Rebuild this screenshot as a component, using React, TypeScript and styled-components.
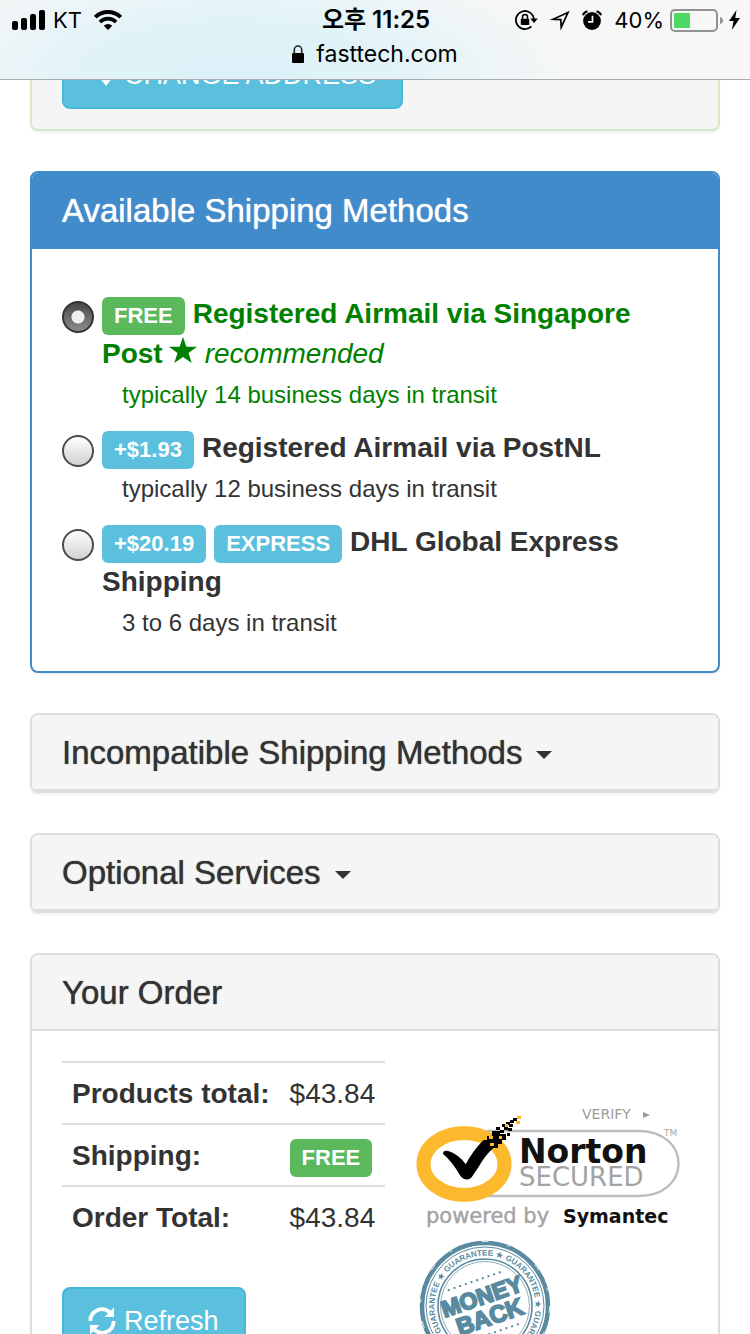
import React, { useState } from 'react';
import styled, { createGlobalStyle, css } from 'styled-components';

const sans = `"Liberation Sans", Arial, "Noto Sans CJK KR", sans-serif`;
const system = `Inter, "Noto Sans CJK KR", sans-serif`;

const GlobalStyle = createGlobalStyle`
  *, *::before, *::after { box-sizing: border-box; }
  html { scrollbar-width: none; }
  body {
    margin: 0;
    background: #fff;
    color: #333;
    font: 28px/40px ${sans};
  }
`;

const BrowserBar = styled.header`
  position: fixed;
  top: 0;
  left: 0;
  right: 0;
  z-index: 10;
  height: 80px;
  border-bottom: 1px solid #a9abac;
  background:
    radial-gradient(ellipse 340px 130px at 235px 80px, #dbf1f8 0%, #e1f3f8 45%, rgba(247, 247, 247, 0) 100%),
    #f7f7f7;
  color: #000;
  font-family: ${system};
`;

const StatusRow = styled.div`
  display: grid;
  grid-template-columns: 1fr auto 1fr;
  align-items: center;
  height: 40px;
  padding: 0 10px 0 12px;
  font-size: 22px;
  line-height: 40px;
`;

const StatusGroup = styled.div<{ $end?: boolean }>`
  display: flex;
  align-items: center;
  gap: ${(p) => (p.$end ? '6px' : '8px')};
  justify-content: ${(p) => (p.$end ? 'flex-end' : 'flex-start')};
  white-space: nowrap;
`;

const StatusIcons = styled.div`
  display: flex;
  align-items: center;
  gap: 12px;
  margin-right: 6px;
`;

const Clock = styled.time`
  font-size: 24px;
  font-weight: 600;
`;

const Carrier = styled.span`
  margin-right: 4px;
`;

const AddressRow = styled.div`
  display: flex;
  align-items: center;
  justify-content: center;
  gap: 12px;
  height: 28px;
  font-size: 23px;
  line-height: 28px;
`;

const Page = styled.main`
  display: flex;
  flex-direction: column;
  gap: 40px;
  padding: 0 30px 40px;
`;

type Tone = 'primary' | 'plain' | 'success';
const toneBorder: Record<Tone, string> = { primary: '#428bca', plain: '#ddd', success: '#d6e9c6' };

const Panel = styled.section<{ $tone: Tone }>`
  border: 2px solid ${(p) => toneBorder[p.$tone]};
  border-radius: 8px;
  background: #fff;
  box-shadow: 0 2px 2px rgba(0, 0, 0, 0.05);
  overflow: hidden;
`;

const AddressPanel = styled(Panel)`
  padding: 41px 30px 20px;
  border-top: 0;
  background: #f5f5f5;
`;

const PanelHeading = styled.h3<{ $tone: Tone }>`
  margin: 0;
  padding: 19px 30px 18px;
  border-bottom: 2px solid ${(p) => toneBorder[p.$tone]};
  background: ${(p) => (p.$tone === 'primary' ? '#428bca' : '#f5f5f5')};
  color: ${(p) => (p.$tone === 'primary' ? '#fff' : '#333')};
  font-size: 33px;
  font-weight: 400;
  line-height: 37px;
  text-shadow: 0 0 1px currentColor;
`;

const Toggle = styled.button`
  display: flex;
  align-items: center;
  gap: 14px;
  padding: 0;
  border: 0;
  background: none;
  color: inherit;
  font: inherit;
  text-align: left;
  text-shadow: inherit;
`;

const Caret = styled.span`
  border: 8px solid transparent;
  border-top-color: currentColor;
  border-bottom: 0;
  margin-top: 4px;
`;

const Button = styled.button`
  display: inline-flex;
  align-items: center;
  gap: 8px;
  padding: 12px 25px 12px 24px;
  border: 2px solid #46b8da;
  border-radius: 8px;
  background: #5bc0de;
  color: #fff;
  font: 27px/40px ${sans};
  white-space: nowrap;
`;

const Methods = styled.div`
  display: flex;
  flex-direction: column;
  gap: 18px;
  padding: 45px 30px 33px;
`;

const Method = styled.div<{ $recommended?: boolean }>`
  display: grid;
  grid-template-columns: 32px minmax(0, 1fr);
  column-gap: 8px;
  color: ${(p) => (p.$recommended ? '#008000' : 'inherit')};
`;

const Radio = styled.input`
  appearance: none;
  width: 32px;
  height: 32px;
  margin: 7px 0 0;
  border: 2px solid #4c4c4c;
  border-radius: 50%;
  background: linear-gradient(#fff, #d2d2d2);
  &:checked {
    border-color: #333;
    background:
      radial-gradient(circle at center, #f0f0f0 0 6px, transparent 7px),
      linear-gradient(#484848, #8c8c8c);
  }
`;

const MethodName = styled.label`
  font-weight: 700;
`;

const Transit = styled.p`
  grid-column: 2;
  margin: 0;
  padding: 6px 0 0 20px;
  font-size: 24px;
  line-height: 30px;
`;

const Recommended = styled.em`
  font-weight: 400;
`;

const Tag = styled.span<{ $free?: boolean }>`
  padding: 6px 12px 7px;
  margin-right: 8px;
  border-radius: 6px;
  background: ${(p) => (p.$free ? '#5cb85c' : '#5bc0de')};
  color: #fff;
  font-size: 22px;
  font-weight: 700;
  line-height: 22px;
  white-space: nowrap;
`;

const OrderBody = styled.div`
  display: grid;
  grid-template-columns: minmax(0, 1fr) 272px;
  column-gap: 32px;
  padding: 30px;
`;

const Summary = styled.div`
  display: flex;
  flex-direction: column;
  align-items: flex-start;
  gap: 40px;
`;

const Totals = styled.table`
  width: 100%;
  border-collapse: separate;
  border-spacing: 0;
`;

const cell = css`
  padding: 11px 10px 9px;
  border-top: 2px solid #ddd;
  text-align: left;
  vertical-align: top;
  white-space: nowrap;
`;
const Label = styled.th`
  ${cell}
  font-weight: 700;
`;
const Amount = styled.td`
  ${cell}
  ${Tag} { margin-right: 0; }
`;

const Badges = styled.div`
  display: flex;
  flex-direction: column;
  align-items: flex-start;
  gap: 11px;
  padding-top: 40px;
`;

const SignalIcon = () => (
  <svg width="33" height="20" viewBox="0 0 33 20" aria-hidden="true">
    <rect x="0" y="11" width="6" height="9" rx="2" />
    <rect x="9" y="8" width="6" height="12" rx="2" />
    <rect x="18" y="4" width="6" height="16" rx="2" />
    <rect x="27" y="0" width="6" height="20" rx="2" />
  </svg>
);

const WifiIcon = () => (
  <svg width="28" height="20" viewBox="0 0 28 20" aria-hidden="true">
    <path d="M1.3 7.2a18 18 0 0 1 25.400 0" fill="none" stroke="#000" strokeWidth="4" />
    <path d="M5.900 12a11.500 11.500 0 0 1 16.200 0" fill="none" stroke="#000" strokeWidth="3.600" />
    <path d="M14 20l-4.200-4.200a6 6 0 0 1 8.400 0z" />
  </svg>
);

const RotationLockIcon = () => (
  <svg width="23" height="20" viewBox="0 0 23 20" aria-hidden="true">
    <path d="M16.400 16.300A9 9 0 1 1 18.900 9.500" fill="none" stroke="#000" strokeWidth="1.800" />
    <path d="M15.200 8.500h7.600L19 13z" />
    <rect x="5.800" y="8.700" width="8.400" height="6.300" rx=".8" />
    <path d="M7.500 9V7a2.500 2.500 0 0 1 5 0v2" fill="none" stroke="#000" strokeWidth="1.500" />
  </svg>
);

const LocationIcon = () => (
  <svg width="20" height="20" viewBox="0 0 20 20" aria-hidden="true">
    <path d="M18 2.500L3 9.300l7.800.3.400 7.800z" fill="none" stroke="#000" strokeWidth="1.700" strokeMiterlimit="10" />
  </svg>
);

const AlarmIcon = () => (
  <svg width="20" height="20" viewBox="0 0 20 20" aria-hidden="true">
    <circle cx="10" cy="11" r="8.900" />
    <path d="M1 5.300Q1.800 2.300 5.500 1.300M19 5.300Q18.200 2.300 14.500 1.300" fill="none" stroke="#000" strokeWidth="2" />
    <path d="M10.500 5.800v6H6" fill="none" stroke="#f7f7f7" strokeWidth="1.700" />
  </svg>
);

const BatteryIcon = () => (
  <svg width="53" height="23" viewBox="0 0 53 23" aria-hidden="true">
    <rect x="1" y="1" width="46" height="21" rx="4" fill="none" stroke="#929292" strokeWidth="2" />
    <rect x="4" y="4" width="16" height="15" rx="1" fill="#4cd964" />
    <path d="M50 8q3 1 3 3.500T50 15z" fill="#929292" />
  </svg>
);

const BoltIcon = () => (
  <svg width="11" height="20" viewBox="0 0 11 20" aria-hidden="true">
    <path d="M7.500 0L0 11h4.600L2.800 20 11 8H6.300z" />
  </svg>
);

const LockIcon = () => (
  <svg width="12" height="18" viewBox="0 0 12 18" aria-hidden="true">
    <rect y="8" width="12" height="10" rx="1" />
    <path d="M2.300 9V5a3.700 4 0 0 1 7.400 0v4" fill="none" stroke="#222" strokeWidth="1.600" />
  </svg>
);

const DownIcon = () => (
  <svg width="28" height="28" viewBox="0 0 28 28" aria-hidden="true">
    <path d="M12 0h12v12h4L18 25 8 12h4z" fill="#fff" />
  </svg>
);

const RefreshIcon = () => (
  <svg width="28" height="28" viewBox="0 0 28 28" aria-hidden="true">
    <g fill="none" stroke="#fff" strokeWidth="3.800">
      <path d="M2.300 14A11.600 11.600 0 0 1 22 5.600" />
      <path d="M25.700 14A11.600 11.600 0 0 1 6 22.400" />
    </g>
    <path d="M26 .5v9.500h-9.500zM2 27.500V18h9.500z" fill="#fff" />
  </svg>
);

const StarIcon = styled.svg`
  width: 28px;
  height: 26px;
  margin: 0 8px 0 6px;
`;

const NortonBadge = () => (
  <svg width="264" height="128" viewBox="0 0 264 128" role="img" aria-label="Norton Secured, powered by Symantec">
    <path d="M70 30H222C248 30 262.500 45 262.500 62.500S248 95 222 95H70" fill="none" stroke="#bdbdbd" strokeWidth="2.400" />
    <ellipse cx="48" cy="63" rx="40.500" ry="31" fill="#fff" stroke="#fdb92e" strokeWidth="14" />
    <path
      d="M28 52.500Q28 50 32 51Q42 54 50 65Q57 51 68 40H72V36H77V31H83V34H89V38H85V42H81V46H77Q68 54 62 65L56 74Q54 77.500 51 77.500Q48 77.500 45 74Q37 60 28 52.500z"
      stroke="#000"
      strokeWidth="2"
    />
    <path d="M80 26h4v3h-4zM84 29h4v3h-4zM88 25h4v4h-4zM92 27h4v3h-4zM90 21h4v3h-4zM86 23h3v3h-3zM94 19h4v3h-4zM97 17h4v3h-4zM91 32h3v3h-3zM93 23h4v3h-4z" />
    <path d="M101 15h4v3h-4zM100 20h4v3h-4zM89 23h3v3h-3zM73 35h4v3h-4zM74 42h4v3h-4zM83 35h3v3h-3z" fill="#fdb92e" />
    <g fontFamily="DejaVu Sans, sans-serif">
      <text x="166" y="18" fontSize="14" fill="#9a9a9a">VERIFY</text>
      <path d="M227 11v6l7-3z" fill="#9a9a9a" />
      <text x="248" y="35" fontSize="9" fill="#aaa">TM</text>
      <text x="103" y="62" fontSize="33" fontWeight="700" fill="#111">Norton</text>
      <text x="103" y="85" fontSize="26" fill="#a3a3a3">SECURED</text>
      <text x="10" y="122" fontSize="21" fill="#a3a3a3" stroke="#a3a3a3" strokeWidth=".4">powered by</text>
      <text x="147" y="122" fontSize="19" fontWeight="700" fill="#111">Symantec</text>
    </g>
  </svg>
);

const starPoints = '0,-3.500 1,-1.100 3.500,-1.100 1.500,.5 2.200,3 0,1.500 -2.200,3 -1.500,.5 -3.500,-1.100 -1,-1.100';

const MoneyBackBadge = () => (
  <svg width="138" height="132" viewBox="-3 0 138 132" role="img" aria-label="Money back guarantee">
    <defs>
      <path id="seal-word" d="M15.500 66A50.500 50.500 0 0 1 116.500 66" />
    </defs>
    <g fill="none" stroke="#5a8aa0">
      <circle cx="66" cy="66" r="63" strokeWidth="4.500" />
      <circle cx="66" cy="66" r="59" strokeWidth="1" />
      <circle cx="66" cy="66" r="47" strokeWidth="1.600" />
      <circle cx="66" cy="66" r="44.500" strokeWidth=".7" />
      <circle cx="66" cy="66" r="64.500" strokeWidth=".8" stroke="#fff" strokeDasharray="7 19 3 31" />
    </g>
    <g fill="#5a8aa0" fontFamily="Liberation Sans, sans-serif" fontWeight="700" textAnchor="middle">
      {[0, 1, 2, 3, 4].map((i) => (
        <g key={i} transform={`rotate(${i * 72 - 20} 66 66)`}>
          <text fontSize="8">
            <textPath href="#seal-word" startOffset="50%">GUARANTEE</textPath>
          </text>
          <g transform="rotate(36 66 66) translate(66 13)">
            <polygon points={starPoints} />
          </g>
        </g>
      ))}
      <g transform="rotate(-19 66 66)">
        <path d="M36 39H96M36 94H96" stroke="#5a8aa0" strokeWidth="2" strokeDasharray="2 4" />
        <text x="66" y="64" fontSize="23" stroke="#5a8aa0" strokeWidth="1.800">MONEY</text>
        <text x="67" y="86" fontSize="24" stroke="#5a8aa0" strokeWidth="1.800">BACK</text>
      </g>
    </g>
  </svg>
);

export default function App() {
  const [method, setMethod] = useState('singapore');
  const radio = (id: string) => (
    <Radio type="radio" name="shipping" id={id} checked={method === id} onChange={() => setMethod(id)} />
  );

  return (
    <>
      <GlobalStyle />
      <BrowserBar>
        <StatusRow>
          <StatusGroup>
            <SignalIcon />
            <Carrier>KT</Carrier>
            <WifiIcon />
          </StatusGroup>
          <Clock>오후 11:25</Clock>
          <StatusGroup $end>
            <StatusIcons>
              <RotationLockIcon />
              <LocationIcon />
              <AlarmIcon />
            </StatusIcons>
            <span>40%</span>
            <BatteryIcon />
            <BoltIcon />
          </StatusGroup>
        </StatusRow>
        <AddressRow>
          <LockIcon />
          <span>fasttech.com</span>
        </AddressRow>
      </BrowserBar>

      <Page>
        <AddressPanel $tone="success">
          <Button type="button">
            <DownIcon />
            CHANGE ADDRESS
          </Button>
        </AddressPanel>

        <Panel $tone="primary">
          <PanelHeading $tone="primary">Available Shipping Methods</PanelHeading>
          <Methods>
            <Method $recommended>
              {radio('singapore')}
              <MethodName htmlFor="singapore">
                <Tag $free>FREE</Tag>
                Registered Airmail via Singapore Post
                <StarIcon viewBox="0 0 28 26" aria-hidden="true">
                  <path d="M14 0l3.400 9.700H28l-8.500 6.200L22.700 26 14 19.900 5.300 26l3.200-10.100L0 9.700h10.600z" fill="#008000" />
                </StarIcon>
                <Recommended>recommended</Recommended>
              </MethodName>
              <Transit>typically 14 business days in transit</Transit>
            </Method>
            <Method>
              {radio('postnl')}
              <MethodName htmlFor="postnl">
                <Tag>+$1.93</Tag>
                Registered Airmail via PostNL
              </MethodName>
              <Transit>typically 12 business days in transit</Transit>
            </Method>
            <Method>
              {radio('dhl')}
              <MethodName htmlFor="dhl">
                <Tag>+$20.19</Tag>
                <Tag>EXPRESS</Tag>
                DHL Global Express Shipping
              </MethodName>
              <Transit>3 to 6 days in transit</Transit>
            </Method>
          </Methods>
        </Panel>

        <Panel $tone="plain">
          <PanelHeading $tone="plain">
            <Toggle type="button" aria-expanded="false">
              Incompatible Shipping Methods
              <Caret />
            </Toggle>
          </PanelHeading>
        </Panel>

        <Panel $tone="plain">
          <PanelHeading $tone="plain">
            <Toggle type="button" aria-expanded="false">
              Optional Services
              <Caret />
            </Toggle>
          </PanelHeading>
        </Panel>

        <Panel $tone="plain">
          <PanelHeading $tone="plain">Your Order</PanelHeading>
          <OrderBody>
            <Summary>
              <Totals>
                <tbody>
                  <tr>
                    <Label scope="row">Products total:</Label>
                    <Amount>$43.84</Amount>
                  </tr>
                  <tr>
                    <Label scope="row">Shipping:</Label>
                    <Amount>
                      <Tag $free>FREE</Tag>
                    </Amount>
                  </tr>
                  <tr>
                    <Label scope="row">Order Total:</Label>
                    <Amount>$43.84</Amount>
                  </tr>
                </tbody>
              </Totals>
              <Button type="button">
                <RefreshIcon />
                Refresh
              </Button>
            </Summary>
            <Badges>
              <NortonBadge />
              <MoneyBackBadge />
            </Badges>
          </OrderBody>
        </Panel>
      </Page>
    </>
  );
}
